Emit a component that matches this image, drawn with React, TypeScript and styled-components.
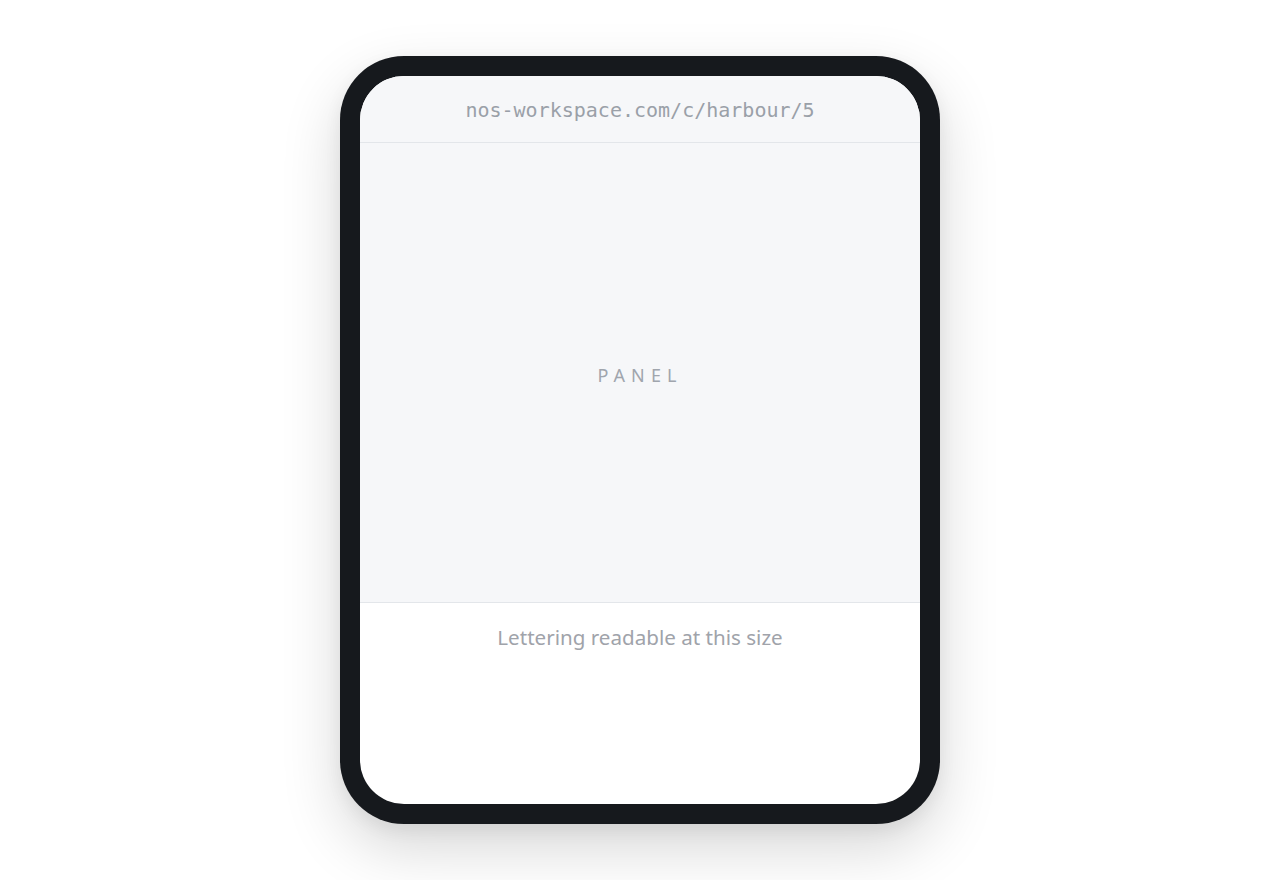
import React from 'react';
import styled, { createGlobalStyle } from 'styled-components';

const GlobalStyle = createGlobalStyle`
    html, body {
        margin: 0;
        padding: 0;
        background: #ffffff;
    }

    body {
        font-family: "Noto Sans", "Liberation Sans", sans-serif;
    }
`

function App() {
    return (
        <>
            <GlobalStyle />
            <Page>
                <Device>
                    <Screen>
                        <AddressBar>nos-workspace.com/c/harbour/5</AddressBar>
                        <Panel>
                            <PanelLabel>PANEL</PanelLabel>
                        </Panel>
                        <Footer>
                            <Caption>Lettering readable at this size</Caption>
                        </Footer>
                    </Screen>
                </Device>
            </Page>
        </>
    )
}

export default App


const Page = styled.div`
    width: 100%;
    height: 880px;
    display: flex;
    align-items: center;
    justify-content: center;
`

const Device = styled.div`
    width: 600px;
    height: 768px;
    box-sizing: border-box;
    padding: 20px;
    background: #16191d;
    border-radius: 64px;
    box-shadow: 0 24px 60px rgba(0, 0, 0, 0.16), 0 6px 18px rgba(0, 0, 0, 0.06);
`

const Screen = styled.div`
    width: 100%;
    height: 100%;
    border-radius: 44px;
    overflow: hidden;
    background: #ffffff;
    display: flex;
    flex-direction: column;
`

const AddressBar = styled.div`
    height: 67px;
    flex-shrink: 0;
    display: flex;
    align-items: center;
    justify-content: center;
    background: #f6f7f9;
    border-bottom: 1px solid #e3e6ea;
    font-family: "DejaVu Sans Mono", "Liberation Mono", monospace;
    font-size: 20px;
    color: #9aa0a8;
    padding-top: 1px;
    box-sizing: border-box;
`

const Panel = styled.div`
    height: 460px;
    flex-shrink: 0;
    display: flex;
    align-items: center;
    justify-content: center;
    background: #f6f7f9;
    border-bottom: 1px solid #e3e6ea;
    padding-top: 4px;
    box-sizing: border-box;
`

const PanelLabel = styled.span`
    font-size: 18px;
    letter-spacing: 0.34em;
    color: #a0a5ad;
`

const Footer = styled.div`
    flex: 1;
    display: flex;
    justify-content: center;
    padding-top: 20px;
`

const Caption = styled.span`
    font-size: 20.6px;
    color: #a0a3aa;
`
